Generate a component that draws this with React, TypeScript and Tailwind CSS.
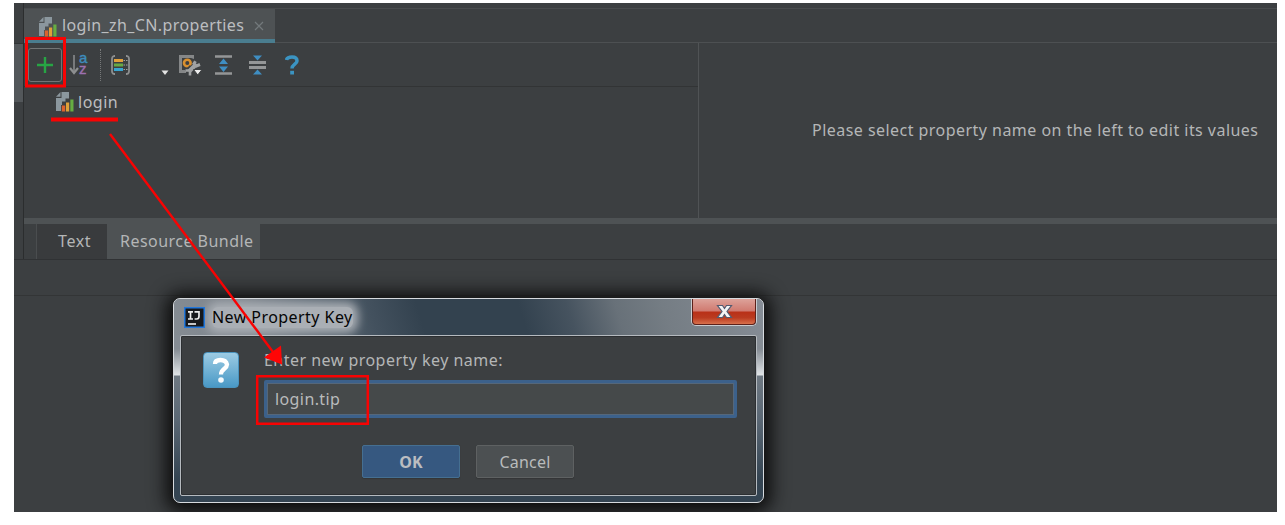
import React from 'react';

function BundleIcon() {
  return (
    <svg width="20" height="22" viewBox="0 0 20 22" className="block shrink-0">
      <path d="M6.500 1H14v6.500h-3.500v3H7V14H6v6H1V7h5.500z" fill="#8b979e" />
      <path d="M1 5.800L5.500 1v4.800z" fill="#8b979e" />
      <path d="M6.800 14.500h3.400v6H6.800z" fill="#dc622d" />
      <path d="M11 11.500h3.200v9H11z" fill="#dfa139" />
      <path d="M15.300 8.500h3.200v12h-3.200z" fill="#66ad42" />
    </svg>
  );
}

function PlusIcon() {
  return (
    <svg width="18" height="18" viewBox="0 0 18 18">
      <path d="M9 1v16M1 9h16" stroke="#27a544" strokeWidth="2.400" />
    </svg>
  );
}

function SortIcon() {
  return (
    <div className="flex h-[26px] w-[19px] items-center">
      <svg width="10" height="20" viewBox="0 0 10 20" className="shrink-0">
        <path d="M5 0v16" stroke="#8d8f90" strokeWidth="1.500" />
        <path d="M1 13l4 5 4-5" fill="none" stroke="#8d8f90" strokeWidth="2.200" />
      </svg>
      <div className="-mt-[3px] flex flex-col font-['Liberation_Sans'] text-[15px] font-medium leading-[11px]">
        <span className="text-[#3e8cbd] [-webkit-text-stroke:0.4px_#3e8cbd]">a</span>
        <span className="text-[#9d70b0] [-webkit-text-stroke:0.4px_#9d70b0]">z</span>
      </div>
    </div>
  );
}

function GroupIcon() {
  return (
    <svg width="21" height="20" viewBox="0 0 21 20">
      <path d="M5 1H4Q2 1.500 2 4v12q0 2.500 2 3h1M16 1h1q2 .5 2 3v12q0 2.500-2 3h-1" fill="none" stroke="#8d8f90" strokeWidth="1.800" />
      <path d="M4 4h9v3H4z" fill="#e0a03b" />
      <path d="M4 8.500h9v3H4z" fill="#66aa45" />
      <path d="M4 13h9v3H4z" fill="#38a4cf" />
      <path d="M13.500 5.500h5M13.500 10h5M13.500 14.500h5" stroke="#a0a2a3" strokeWidth="1.200" strokeDasharray="1.500 1" />
    </svg>
  );
}

function Caret() {
  return (
    <svg width="8" height="6" viewBox="0 0 8 6">
      <path d="M0.500 0.500h7L4 5z" fill="#e4e4e4" />
    </svg>
  );
}

function SettingsIcon() {
  return (
    <svg width="25" height="22" viewBox="0 0 25 22">
      <path d="M1 1h15v4l-3-1H4v12h4v3H1z" fill="#858788" />
      <circle cx="9.300" cy="9" r="3.300" fill="none" stroke="#d9902f" strokeWidth="2.600" />
      <path d="M14.500 13.500L9.500 18.500" stroke="#3c3f41" strokeWidth="7" />
      <path d="M17.500 7.200L16 9.500L18.500 12L22 10.500" fill="none" stroke="#a0a2a3" strokeWidth="3" />
      <path d="M17 11.500L11 17.500" stroke="#a0a2a3" strokeWidth="4.200" />
      <path d="M7.500 16.500h4.500v5" fill="none" stroke="#a0a2a3" strokeWidth="2.600" />
      <path d="M15.500 15.500h8.500L19.750 21z" fill="#ededed" stroke="#3c3f41" strokeWidth="1" />
    </svg>
  );
}

function ExpandIcon() {
  return (
    <svg width="17" height="20" viewBox="0 0 17 20">
      <path d="M0 1.500h17M0 18.500h17" stroke="#949697" strokeWidth="2.600" />
      <path d="M8.500 3.500l4.500 5.500H4zM8.500 17l4.500-5.500H4z" fill="#3f8ec2" />
    </svg>
  );
}

function CollapseIcon() {
  return (
    <svg width="17" height="20" viewBox="0 0 17 20">
      <path d="M0 7.500h17M0 12.500h17" stroke="#949697" strokeWidth="2.800" />
      <path d="M8.500 5.500L4 0.500h9zM8.500 14.500l-4.500 5h9z" fill="#3f8ec2" />
    </svg>
  );
}

function HelpIcon() {
  return (
    <svg width="14" height="20" viewBox="0 0 14 20">
      <path d="M1.500 5C2 2.500 4 2 7 2s5 1.400 5 4c0 3-5 3.500-5 7.500" fill="none" stroke="#3b94c2" strokeWidth="3.500" />
      <path d="M5.200 15.800h3.800v3.700H5.200z" fill="#3b94c2" />
    </svg>
  );
}

function Toolbar() {
  return (
    <div className="flex h-[44px] items-center border-b border-[#323435] pl-[4px]">
      <button className="flex h-[34px] w-[34px] items-center justify-center rounded-[3px] border border-[#727576]">
        <PlusIcon />
      </button>
      <div className="ml-[7px]"><SortIcon /></div>
      <div className="ml-[12px] h-[32px] border-l border-dotted border-[#77797a]" />
      <div className="ml-[9px]"><GroupIcon /></div>
      <div className="ml-[30px] mt-[16px] flex"><Caret /></div>
      <div className="ml-[9px]"><SettingsIcon /></div>
      <div className="ml-[12px]"><ExpandIcon /></div>
      <div className="ml-[17px]"><CollapseIcon /></div>
      <div className="ml-[19px]"><HelpIcon /></div>
    </div>
  );
}

function Editor() {
  return (
    <div className="flex h-[256px] flex-col">
      <div className="h-[6px] border-b border-[#494c4e]" />
      <div className="flex h-[34px] shrink-0">
        <div className="flex w-[251px] items-center border-b-4 border-[#4a7d8f] bg-[#4e5254] pl-[14px]">
          <div className="mt-[5px]"><BundleIcon /></div>
          <span className="ml-[4px] mt-[2px] whitespace-nowrap text-[16px] leading-[20px] tracking-[0.390px] text-[#bcbec0]">login_zh_CN.properties</span>
          <svg width="10" height="10" viewBox="0 0 10 10" className="ml-[10px] mt-[3px]">
            <path d="M1 1l8 8M9 1L1 9" stroke="#73797c" strokeWidth="1.200" />
          </svg>
        </div>
        <div className="grow border-b border-[#4d5052]" />
      </div>
      <div className="flex h-[175px] shrink-0">
        <div className="w-[675px] border-r border-[#505355]">
          <Toolbar />
          <div className="flex items-start pl-[31px] pt-[4px]">
            <BundleIcon />
            <span className="ml-[3px] text-[16px] leading-[22px] tracking-[0.500px] text-[#bcbec0]">login</span>
          </div>
        </div>
        <div className="flex grow items-center pb-[2px] pl-[113px]">
          <span className="whitespace-nowrap text-[16px] tracking-[0.460px] text-[#b4b6b7]">Please select property name on the left to edit its values</span>
        </div>
      </div>
      <div className="h-[6px] shrink-0 bg-[#4e5254]" />
      <div className="flex h-[35px] shrink-0 text-[16px] text-[#b4b6b7]">
        <div className="w-[13px] border-r border-[#4a4d4f]" />
        <div className="flex w-[70px] items-center bg-[#393b3d] pb-[2px] pl-[21px]">
          <span className="tracking-[0.600px]">Text</span>
        </div>
        <div className="flex w-[153px] items-center bg-[#4e5254] pb-[2px] pl-[13px]">
          <span className="whitespace-nowrap tracking-[0.470px]">Resource Bundle</span>
        </div>
      </div>
    </div>
  );
}

function Dialog() {
  return (
    <div className="absolute left-[173px] top-[298px] flex h-[205px] w-[591px] flex-col overflow-hidden rounded-[7px] border border-[#d6dade] bg-[linear-gradient(180deg,#858c94_0px,#858c94_50px,#dfe3e6_76px,#6e7882_77px,#5b6875_120px,#344452_180px,#344452_205px)] px-[6px] pb-[6px]">
      <div className="-mx-[6px] flex h-[36px] shrink-0 items-start bg-[linear-gradient(73deg,#858c93_0%,#7c838b_14%,#5d6974_24%,#43515e_34%,#33424f_42%,#33424f_59%,#46535f_67%,#687179_75%,#757d84_83%,#868d96_100%)] pl-[10px]">
        <svg width="21" height="21" viewBox="0 0 21 21" className="relative z-10 mt-[8px] shrink-0">
          <path d="M0.750 0.750h19.500v19.500H0.750z" fill="#17191c" stroke="#2278dc" strokeWidth="1.500" />
          <path d="M4 4.800h5M6.500 5v7M4 12h5M10.500 4.800h4.500v4.500q0 2.700-2.400 2.700h-2" fill="none" stroke="#ededed" strokeWidth="1.700" />
          <path d="M4 17h8" stroke="#fff" strokeWidth="1.600" />
        </svg>
        <span className="ml-[7px] mt-[8px] whitespace-nowrap rounded-[6px] bg-[#aaafb5] text-[16px] leading-[21px] tracking-[0.440px] text-[#050505] shadow-[0_0_10px_5px_#aaafb5]">New Property Key</span>
        <button className="ml-auto mr-[6px] flex h-[27px] w-[66px] items-start justify-center rounded-b-[5px] border border-t-0 border-[#c9ccd0]">
          <span className="flex h-full w-full items-center justify-center rounded-b-[4px] border border-t-0 border-[#5d211a] bg-[linear-gradient(180deg,#dda29a_0%,#d07a70_48%,#b93018_52%,#ba3b20_75%,#d8704c_100%)]">
            <svg width="17" height="15" viewBox="0 0 17 15">
              <path d="M1.500 1.500h5l2 3 2-3h5l-4.500 6 4.500 6h-5l-2-3-2 3h-5l4.500-6z" fill="#f4f4f4" stroke="#545b70" strokeWidth="1.200" />
            </svg>
          </span>
        </button>
      </div>
      <div className="z-10 flex grow flex-col rounded-[2px] border border-[#b5babf] bg-[#3c3f41] shadow-[inset_0_0_0_1px_#2c2f32]">
        <div className="flex h-[82px]">
          <div className="ml-[22px] mt-[16px] flex h-[36px] w-[36px] shrink-0 items-center justify-center rounded-[4px] border border-[#4a93bd] bg-[linear-gradient(180deg,#9ccbe3,#4999c6)]">
            <svg width="18" height="26" viewBox="0 0 18 26">
              <path d="M3 7Q3 3 8.500 3T15 7.500C15 12 9 11.500 9 17.500" fill="none" stroke="#fff" strokeWidth="4.300" />
              <circle cx="9" cy="23" r="2.800" fill="#f4f9fc" />
            </svg>
          </div>
          <div className="ml-[25px]">
            <div className="mt-[13px] whitespace-nowrap text-[16px] leading-[22px] tracking-[0.470px] text-[#b4b6b7]">Enter new property key name:</div>
            <div className="mt-[9px] flex h-[38px] w-[473px] items-center rounded-[2px] border-[3px] border-[#3c618b] bg-[#45494a] pb-px pl-[8px] shadow-[inset_0_0_0_1px_#55677a]">
              <span className="text-[16px] leading-[20px] tracking-[0.400px] text-[#b9bbbc]">login.tip</span>
            </div>
          </div>
        </div>
        <div className="mt-[27px] flex gap-[16px] pl-[181px] text-[16px]">
          <button className="h-[33px] w-[98px] rounded-[2px] border border-[#456f91] bg-[#365880] font-bold text-[#bbbdc0] shadow-[0_1px_1px_#333537]">OK</button>
          <button className="h-[33px] w-[98px] rounded-[2px] border border-[#5e6162] bg-[#4c5052] tracking-[0.200px] text-[#b9bbbc] shadow-[0_1px_1px_#333537]">Cancel</button>
        </div>
      </div>
    </div>
  );
}

function Annotations() {
  return (
    <svg width="1285" height="525" viewBox="0 0 1285 525" className="pointer-events-none absolute left-0 top-0 z-20">
      <g fill="none" stroke="#f80303">
        <path d="M26.500 38.500h38v47.500h-38z" strokeWidth="3" />
        <path d="M51 119.500h67" strokeWidth="4" />
        <path d="M110 134L273 352" strokeWidth="2.400" />
        <path d="M257.200 376.200h110.600v47.600H257.200z" strokeWidth="2.500" />
      </g>
      <path d="M281 345.500L264 357.500L282 364.500z" fill="#ff0505" />
    </svg>
  );
}

export default function App() {
  return (
    <div className="relative h-[525px] w-[1285px] overflow-hidden bg-white pl-[14px] pt-[3px] font-['Noto_Sans','Noto_Sans_CJK_SC',sans-serif]">
      <div className="h-[509px] w-[1263px] overflow-hidden bg-[#3c3f41]">
        <div className="flex h-[257px] border-b border-[#303234]">
          <div className="w-[10px] shrink-0 border-r border-[#2b2d2e] pt-[40px]">
            <div className="h-[59px] border-t border-[#323435] bg-[#53575a]" />
          </div>
          <div className="grow"><Editor /></div>
        </div>
        <div className="h-[36px] border-b border-[#333536]" />
        <div className="ml-[159px] mt-[2px] h-[205px] w-[591px] rounded-[8px] shadow-[0_2px_18px_7px_#0c0c0c]" />
      </div>
      <Dialog />
      <Annotations />
    </div>
  );
}
